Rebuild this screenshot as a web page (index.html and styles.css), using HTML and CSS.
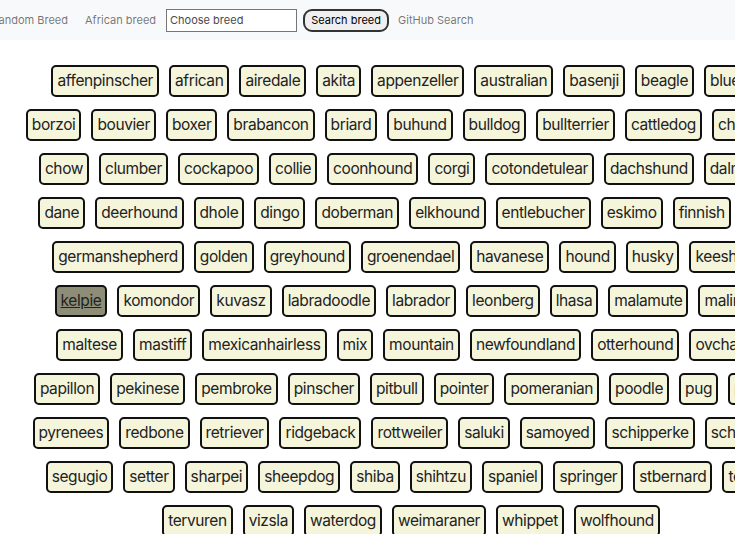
FILE: index.html
```html
<!DOCTYPE html>
<html lang="en">
<head>
<meta charset="utf-8">
<title>Dog breeds</title>
<link rel="stylesheet" href="styles.css">
</head>
<body>
<nav class="nav">
  <div class="cut"><a class="nav-link" href="#">Random Breed</a></div>
  <a class="nav-link" href="#">African breed</a>
  <form class="search">
    <input class="search-input" type="text" placeholder="Choose breed">
    <button class="search-btn" type="button">Search breed</button>
  </form>
  <a class="nav-link" href="#">GitHub Search</a>
</nav>
<main class="breeds">
  <div class="row">
    <button class="breed">affenpinscher</button><button class="breed">african</button><button class="breed">airedale</button><button class="breed">akita</button><button class="breed">appenzeller</button><button class="breed">australian</button><button class="breed">basenji</button><button class="breed">beagle</button><button class="breed">bluetick</button>
  </div>
  <div class="row">
    <button class="breed">borzoi</button><button class="breed">bouvier</button><button class="breed">boxer</button><button class="breed">brabancon</button><button class="breed">briard</button><button class="breed">buhund</button><button class="breed">bulldog</button><button class="breed">bullterrier</button><button class="breed">cattledog</button><button class="breed">chihuahua</button>
  </div>
  <div class="row">
    <button class="breed">chow</button><button class="breed">clumber</button><button class="breed">cockapoo</button><button class="breed">collie</button><button class="breed">coonhound</button><button class="breed">corgi</button><button class="breed">cotondetulear</button><button class="breed">dachshund</button><button class="breed">dalmatian</button>
  </div>
  <div class="row">
    <button class="breed">dane</button><button class="breed">deerhound</button><button class="breed">dhole</button><button class="breed">dingo</button><button class="breed">doberman</button><button class="breed">elkhound</button><button class="breed">entlebucher</button><button class="breed">eskimo</button><button class="breed">finnish</button><button class="breed">frise</button>
  </div>
  <div class="row">
    <button class="breed">germanshepherd</button><button class="breed">golden</button><button class="breed">greyhound</button><button class="breed">groenendael</button><button class="breed">havanese</button><button class="breed">hound</button><button class="breed">husky</button><button class="breed">keeshond</button>
  </div>
  <div class="row">
    <button class="breed selected">kelpie</button><button class="breed">komondor</button><button class="breed">kuvasz</button><button class="breed">labradoodle</button><button class="breed">labrador</button><button class="breed">leonberg</button><button class="breed">lhasa</button><button class="breed">malamute</button><button class="breed">malinois</button>
  </div>
  <div class="row">
    <button class="breed">maltese</button><button class="breed">mastiff</button><button class="breed">mexicanhairless</button><button class="breed">mix</button><button class="breed">mountain</button><button class="breed">newfoundland</button><button class="breed">otterhound</button><button class="breed">ovcharka</button>
  </div>
  <div class="row">
    <button class="breed">papillon</button><button class="breed">pekinese</button><button class="breed">pembroke</button><button class="breed">pinscher</button><button class="breed">pitbull</button><button class="breed">pointer</button><button class="breed">pomeranian</button><button class="breed">poodle</button><button class="breed">pug</button><button class="breed">puggle</button>
  </div>
  <div class="row">
    <button class="breed">pyrenees</button><button class="breed">redbone</button><button class="breed">retriever</button><button class="breed">ridgeback</button><button class="breed">rottweiler</button><button class="breed">saluki</button><button class="breed">samoyed</button><button class="breed">schipperke</button><button class="breed">schnauzer</button>
  </div>
  <div class="row">
    <button class="breed">segugio</button><button class="breed">setter</button><button class="breed">sharpei</button><button class="breed">sheepdog</button><button class="breed">shiba</button><button class="breed">shihtzu</button><button class="breed">spaniel</button><button class="breed">springer</button><button class="breed">stbernard</button><button class="breed">terrier</button>
  </div>
  <div class="row">
    <button class="breed">tervuren</button><button class="breed">vizsla</button><button class="breed">waterdog</button><button class="breed">weimaraner</button><button class="breed">whippet</button><button class="breed">wolfhound</button>
  </div>
</main>
</body>
</html>
```

FILE: styles.css
```css
html, body {
  margin: 0;
  padding: 0;
  background: #ffffff;
  overflow: hidden;
  font-family: Inter, "Liberation Sans", sans-serif;
}

.nav {
  display: flex;
  align-items: center;
  height: 40px;
  padding-left: 68px;
  background: #f8f9fa;
  white-space: nowrap;
}

.cut {
  width: 0;
  display: flex;
  justify-content: flex-end;
  margin-right: 17px;
}

.nav-link {
  font-size: 11px;
  color: rgba(0, 0, 0, 0.55);
  text-decoration: none;
  line-height: 16px;
}

.search {
  display: flex;
  align-items: center;
  margin: 0 9px 0 10px;
  gap: 6px;
}

.search-input {
  box-sizing: border-box;
  width: 131px;
  height: 23px;
  margin: 0;
  padding: 0 3px;
  border: 1px solid #767676;
  border-radius: 0;
  background: #fff;
  font-family: Inter, "Liberation Sans", sans-serif;
  font-size: 11px;
  color: #333;
}

.search-input::placeholder {
  color: #4a4a4a;
  opacity: 1;
}

.search-btn {
  box-sizing: border-box;
  width: 86px;
  height: 23px;
  margin: 0;
  padding: 0;
  border: 2px solid #333;
  border-radius: 9px;
  background: #efefef;
  font-family: Inter, "Liberation Sans", sans-serif;
  font-size: 11px;
  color: #000;
}

.breeds {
  width: 822px;
  display: flex;
  flex-direction: column;
  align-items: center;
  gap: 12px;
  padding-top: 25px;
}

.row {
  display: flex;
  gap: 10px;
  white-space: nowrap;
}

.breed {
  flex-shrink: 0;
  box-sizing: border-box;
  height: 32px;
  margin: 0;
  padding: 0 4px;
  border: 2px solid #111;
  border-radius: 5px;
  background: #f5f5dc;
  font-family: Inter, "Liberation Sans", sans-serif;
  font-size: 15.5px;
  letter-spacing: -0.4px;
  line-height: 20px;
  color: #222;
}

.breed.selected {
  background: #8e8e78;
  text-decoration: underline;
}
```
